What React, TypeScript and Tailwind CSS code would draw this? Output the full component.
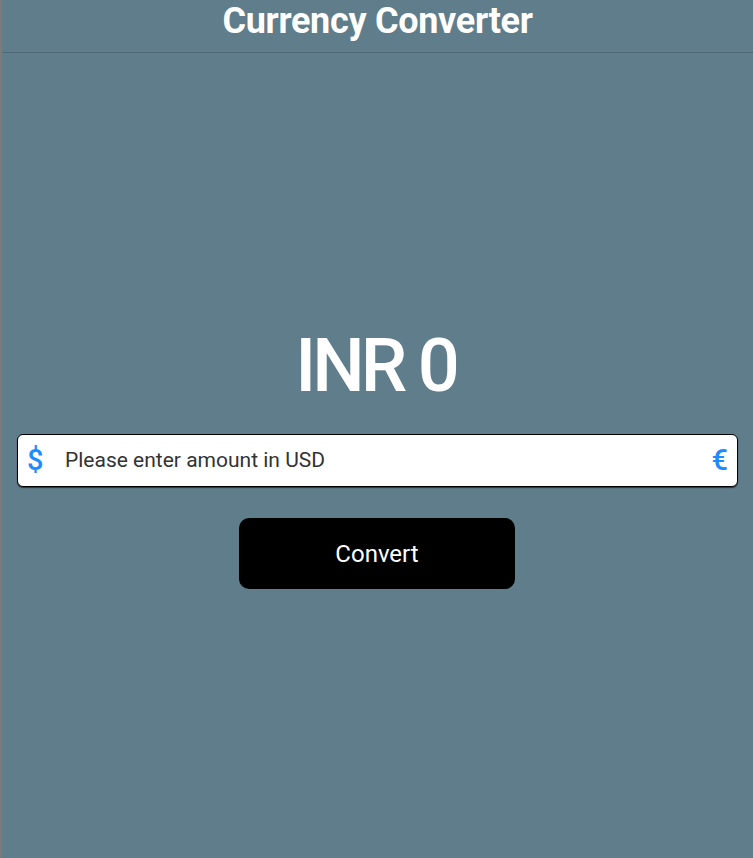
import { useState } from 'react';

export default function App() {
  const [amount, setAmount] = useState('');
  const [result, setResult] = useState(0);

  // USD -> INR
  const handleConvert = () => {
    const value = parseFloat(amount);
    setResult(isNaN(value) ? 0 : Math.round(value * 83));
  };

  return (
    <div
      className="min-h-[858px] bg-[#607d8b] border-l-2 border-[#7b7b7b] flex flex-col"
      style={{ fontFamily: 'Roboto, "Liberation Sans", sans-serif' }}
    >
      {/* 헤더 */}
      <div className="h-[53px] border-b border-[#4e6774] flex justify-center">
        <h1 className="text-[36px] leading-[42px] font-bold text-white tracking-[-0.3px]">
          Currency Converter
        </h1>
      </div>

      <div className="flex flex-col items-center px-[15px] pt-[270px]">
        <div className="text-[74px] leading-[86px] font-medium text-white tracking-[-4px] mr-[4px]">
          INR {result}
        </div>

        <div className="mt-[25px] w-full h-[53px] bg-white border border-black rounded-[6px] shadow-[0_1px_1px_rgba(0,0,0,0.6)] flex items-center px-[9px]">
          <span className="text-[29px] font-medium text-[#1e8cff] w-[38px] leading-none">$</span>
          <input
            type="text"
            value={amount}
            onChange={(e) => setAmount(e.target.value)}
            placeholder="Please enter amount in USD"
            className="flex-1 text-[21px] text-[#333] placeholder-[#333] outline-none bg-transparent"
          />
          <span className="text-[29px] font-medium text-[#1e8cff] leading-none">€</span>
        </div>

        <button
          type="button"
          onClick={handleConvert}
          className="mt-[31px] w-[276px] h-[71px] bg-black text-white text-[24px] rounded-[10px] mr-[1px]"
        >
          Convert
        </button>
      </div>
    </div>
  );
}
